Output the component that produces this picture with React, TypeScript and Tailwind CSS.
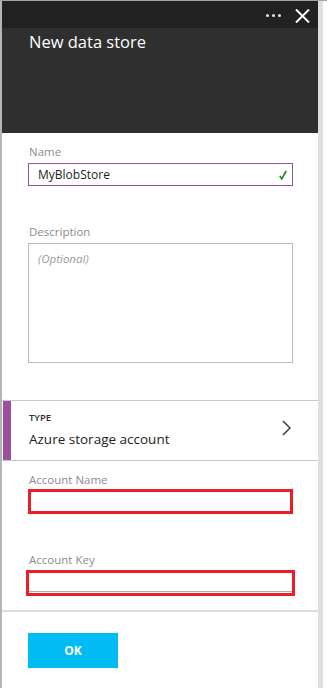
import React from "react";

const font = { fontFamily: '"Open Sans", "Noto Sans", sans-serif' };

function Label({ children }: { children: React.ReactNode }) {
  return <div className="h-4 text-[11.5px] leading-4 text-[#8c8c8c]">{children}</div>;
}

export default function App() {
  return (
    <div className="flex h-[688px] w-[327px] border-t border-[#a3a3a3] bg-white" style={font}>
      <div className="w-[2px] shrink-0 bg-[#b4b4b4]" />
      <div className="flex w-[316px] shrink-0 flex-col">
        {/* header */}
        <div className="flex h-[27px] items-center justify-end gap-[14px] bg-[#212121] pr-[8px]">
          <div className="flex gap-[3px] pt-[1px]">
            <span className="h-[3px] w-[3px] rounded-full bg-[#e6e6e6]" />
            <span className="h-[3px] w-[3px] rounded-full bg-[#e6e6e6]" />
            <span className="h-[3px] w-[3px] rounded-full bg-[#e6e6e6]" />
          </div>
          <svg width="15" height="14" viewBox="0 0 15 14" className="mt-[3px]">
            <path d="M1 0.5 L14 13.5 M14 0.5 L1 13.5" stroke="#fff" strokeWidth="2" />
          </svg>
        </div>
        <div className="h-[105px] bg-[#2f2f2f] pl-[27px] pt-[1px]">
          <div className="text-[16.5px] leading-[26px] text-white">New data store</div>
        </div>

        {/* form */}
        <div className="flex flex-col pl-[26px] pr-[25px] pt-[11px]">
          <div className="pl-[1px]">
            <Label>Name</Label>
          </div>
          <div className="mt-[3px] flex h-[23px] items-center justify-between border border-[#9b509a] pl-[9px] pr-[5px]">
            <span className="text-[12px] text-[#1e1e1e]">MyBlobStore</span>
            <svg width="8" height="10" viewBox="0 0 8 10">
              <path d="M0.8 6 L2.8 8.8 L7.2 1" stroke="#1d8a2a" strokeWidth="1.7" fill="none" />
            </svg>
          </div>
          <div className="mt-[38px] pl-[1px]">
            <Label>Description</Label>
          </div>
          <div className="mt-[3px] h-[120px] border border-[#bcbcbc] pl-[9px] pt-[1px]">
            <span className="text-[11.5px] italic leading-4 text-[#9a9a9a]">(Optional)</span>
          </div>
        </div>

        {/* type row */}
        <div className="mt-[37px] flex h-[61px] border-y border-[#c8c8c8]">
          <div className="ml-[1px] w-[8px] bg-[#9c4f9c]" />
          <div className="flex flex-1 items-center justify-between pl-[18px] pr-[27px]">
            <div className="flex flex-col">
              <span className="text-[9.5px] font-semibold leading-[12px] text-[#2a2a2a]">TYPE</span>
              <span className="mt-[5px] text-[13.5px] leading-[20px] text-[#222]">Azure storage account</span>
            </div>
            <svg width="9" height="16" viewBox="0 0 9 16" className="mb-[6px]">
              <path d="M1 1 L8 8 L1 15" stroke="#3c3c3c" strokeWidth="1.5" fill="none" />
            </svg>
          </div>
        </div>

        <div className="flex flex-col pl-[26px] pr-[25px] pt-[11px]">
          <div className="pl-[1px]">
            <Label>Account Name</Label>
          </div>
          <div className="mt-[1px] h-[25px] border-[3px] border-[#ee1c25]" />
          <div className="mt-[38px] pl-[1px]">
            <Label>Account Key</Label>
          </div>
          <div className="-mx-[2px] mt-[2px] flex h-[26px] flex-col justify-end border-[3px] border-[#ee1c25] pb-[1px]">
            <div className="h-px bg-[#acacac]" />
          </div>
        </div>

        <div className="mt-[14px] h-[2px] bg-[#dcdcdc]" />

        <div className="pl-[26px] pt-[21px]">
          <button className="h-[35px] w-[90px] bg-[#00bcf2] text-[12px] font-bold text-white">OK</button>
        </div>
      </div>
      <div className="w-[5px] shrink-0 bg-[#dedee4]" />
      <div className="flex-1 bg-white" />
    </div>
  );
}
